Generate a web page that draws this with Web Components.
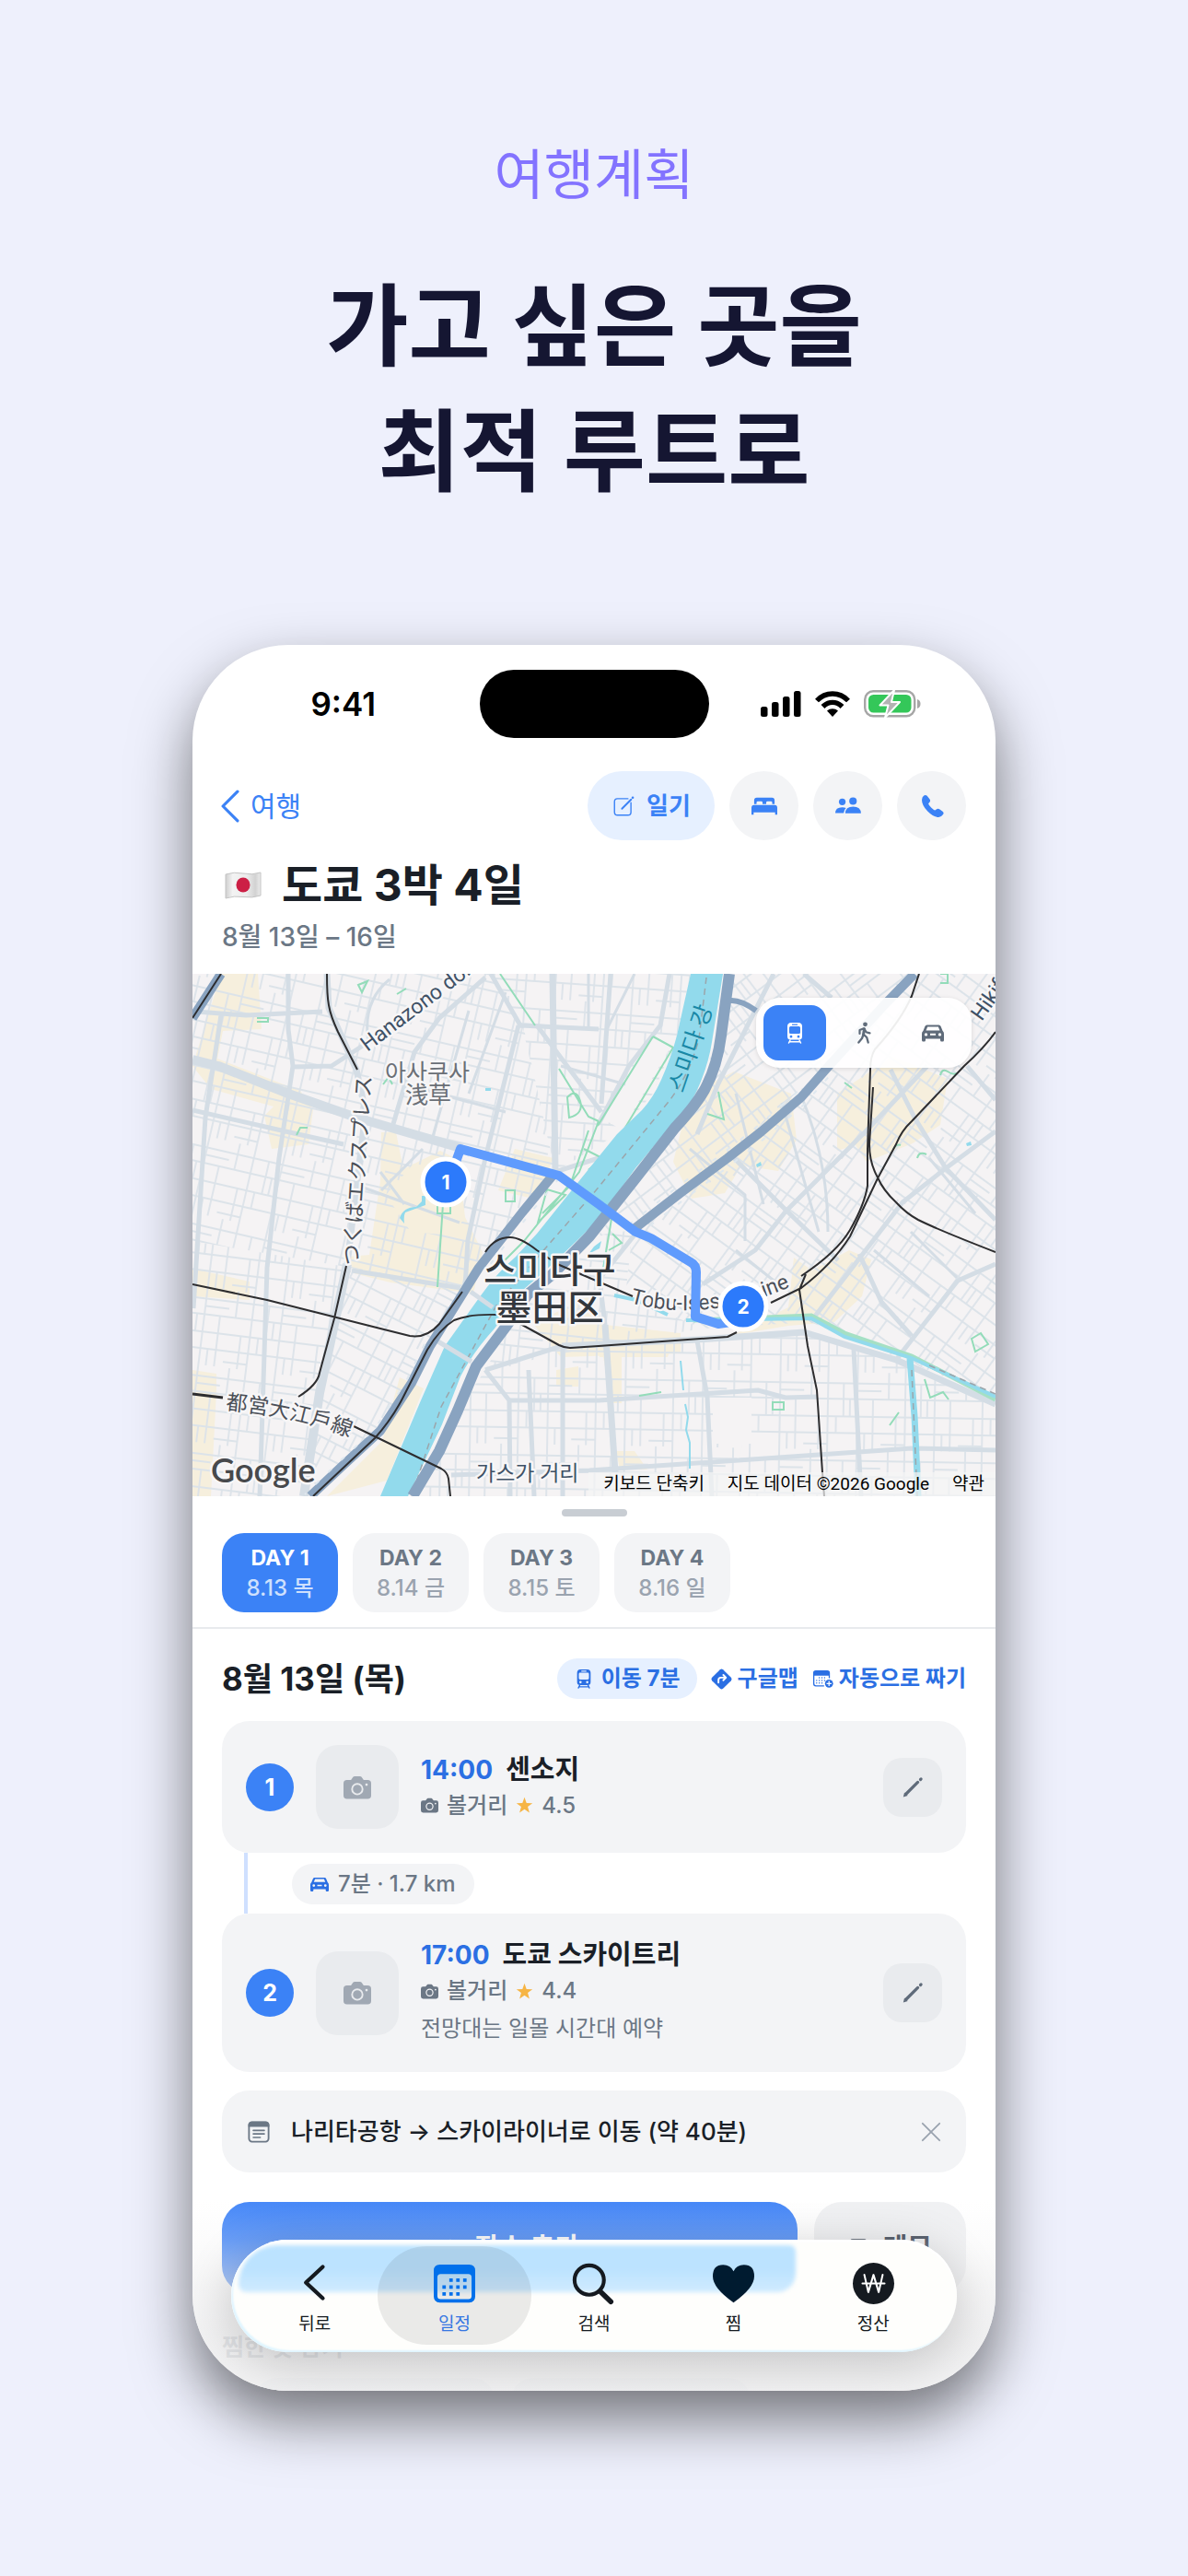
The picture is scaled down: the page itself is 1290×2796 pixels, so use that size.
<!DOCTYPE html>
<html lang="ko">
<head>
<meta charset="utf-8">
<meta name="viewport" content="width=device-width, initial-scale=1">
<title>여행계획</title>
<style>
    body {
        margin: 0;
        min-height: 100vh;
        background: #eef0fc;
        color: #1a1f27;
        font-family: Inter, "Noto Sans CJK KR", sans-serif;
    }
</style>
</head>
<body>
<promo-page>
    <span slot="eyebrow">여행계획</span>
    <span slot="title">가고 싶은 곳을<br>최적 루트로</span>
    <phone-frame>
        <status-bar time="9:41"></status-bar>
        <trip-header back="여행" dates="8월 13일 – 16일">도쿄 3박 4일</trip-header>
        <route-map></route-map>
        <day-tabs>
            <day-tab day="DAY 1" date="8.13 목" active></day-tab>
            <day-tab day="DAY 2" date="8.14 금"></day-tab>
            <day-tab day="DAY 3" date="8.15 토"></day-tab>
            <day-tab day="DAY 4" date="8.16 일"></day-tab>
        </day-tabs>
        <day-plan heading="8월 13일 (목)">
            <place-card number="1" time="14:00" name="센소지" kind="볼거리" rating="4.5"></place-card>
            <travel-leg>7분 · 1.7 km</travel-leg>
            <place-card number="2" time="17:00" name="도쿄 스카이트리" kind="볼거리" rating="4.4">전망대는 일몰 시간대 예약</place-card>
            <memo-card>나리타공항 → 스카이라이너로 이동 (약 40분)</memo-card>
            <plan-actions></plan-actions>
        </day-plan>
        <tab-bar slot="bar">
            <tab-item icon="back">뒤로</tab-item>
            <tab-item icon="calendar" active>일정</tab-item>
            <tab-item icon="search">검색</tab-item>
            <tab-item icon="heart">찜</tab-item>
            <tab-item icon="won">정산</tab-item>
        </tab-bar>
    </phone-frame>
</promo-page>

<script>
const line = 'fill="none" stroke="currentColor" stroke-linecap="round" stroke-linejoin="round"';
const ICONS = {
    chevron: `<path ${line} stroke-width="2" d="M17 2 7 12l10 10"/>`,
    back: `<path ${line} stroke-width="2.4" d="M17 2.5 6.8 12 17 21.5"/>`,
    compose: `<path ${line} stroke-width="1.3" d="M16.500 4.500H6Q3 4.500 3 7.500v10.500q0 3 3 3h10.500q3 0 3-3V8.500"/><path ${line} stroke-width="1.8" d="m10.500 14.500 9.200-9.200"/><circle cx="21.300" cy="3.400" r="1.200" fill="currentColor"/>`,
    bed: `<path fill="currentColor" d="M2.500 10V6.500A2.500 2.500 0 0 1 5 4h14a2.500 2.500 0 0 1 2.500 2.500V10h-2.200V8.700q0-1.200-1.200-1.200h-3.200q-1.200 0-1.200 1.200V10h-3.400V8.700q0-1.200-1.200-1.200H5.900q-1.200 0-1.200 1.200V10zM0 13.500Q0 11 2.500 11h19q2.500 0 2.500 2.500V20h-2v-2.200H2V20H0z"/>`,
    people: `<g fill="currentColor"><circle cx="6.500" cy="8" r="3.100"/><circle cx="16.500" cy="7.300" r="3.500"/><path d="M0 18.500q0-5.500 6.500-5.500 2 0 3.500.8-2 1.700-2.200 4.700z"/><path d="M9.300 18.600q.2-6.200 7.300-6.200t7.300 6.200z"/></g>`,
    phone: `<path fill="currentColor" d="M4.500 2.200q1.500-1.200 2.900.2l2.500 3.200q1 1.500-.1 2.700l-1.200 1.400q.3 1.300 2.600 3.500t3.600 2.700l1.600-1.200q1.200-.9 2.500 0l3 2.200q1.600 1.300.4 2.900-1.600 2.400-4 2.400-5 0-10.400-5.500T2.600 6.200q0-2.600 1.900-4z"/>`,
    train: `<path fill="currentColor" fill-rule="evenodd" d="M8 1h8q4 .3 4 4v11q0 3.500-3.500 3.500h-9Q4 19.500 4 16V5q0-3.700 4-4zm1 1.500v1.200h6V2.500zM7.500 5Q6 5 6 6.500v5Q6 13 7.500 13h9q1.500 0 1.500-1.500v-5Q18 5 16.500 5zM8 14.800a1.400 1.400 0 1 0 0 2.800 1.400 1.400 0 0 0 0-2.800zm8 0a1.400 1.400 0 1 0 0 2.800 1.400 1.400 0 0 0 0-2.800z"/><path ${line} stroke-width="1.500" d="m7 20-1.500 3M17 20l1.500 3M6.500 21.700h11"/>`,
    walk: `<circle cx="13.500" cy="2.800" r="2.400" fill="currentColor"/><path ${line} stroke-width="2.200" d="M12 7.200 7.500 9v4M12.500 7.500l2 3.700 4 1.200"/><path ${line} stroke-width="3" d="m12.500 8-1 6"/><path ${line} stroke-width="2.300" d="m11.500 14-1.500 4-3.700 4.500M12 14l3.200 3 1.500 5.500"/>`,
    car: `<path fill="currentColor" fill-rule="evenodd" d="M5.500 3.500h13q1.500 0 2.100 1.500l2 5q1.400 1 1.400 3V20q0 1.500-1.500 1.500h-1Q20 21.500 20 20v-1.500H4V20q0 1.500-1.500 1.500h-1Q0 21.500 0 20v-7q0-2 1.400-3l2-5Q4 3.500 5.500 3.500zm.7 2L4.500 9.400h15l-1.700-3.900zM4.500 12.200a1.700 1.700 0 1 0 0 3.400 1.700 1.700 0 0 0 0-3.400zm4.500.6v2h6v-2zm10.500-.6a1.700 1.700 0 1 0 0 3.400 1.700 1.700 0 0 0 0-3.400z"/>`,
    turn: `<path fill="currentColor" d="M10.300 1.200q1.700-1.600 3.400 0l9.100 9.100q1.600 1.700 0 3.400l-9.100 9.100q-1.700 1.600-3.400 0l-9.100-9.100q-1.600-1.700 0-3.400z"/><path fill="none" stroke="#fff" stroke-width="2" stroke-linecap="round" stroke-linejoin="round" d="M8.500 16v-3q0-2.700 2.700-2.700h5.300m-2.500-3 3 3-3 3"/>`,
    calendarAdd: `<path fill="currentColor" fill-rule="evenodd" d="M4 2h13q3 0 3 3v6h-1.400V8H2.400v9q0 2 2 2h9v1.300H4q-3 0-3-3V5q0-3 3-3z"/><path ${line} stroke-width="1.500" stroke-dasharray="0 3" d="M8 10.500h9M5 13.500h10M5 16.500h7"/><circle cx="19" cy="17" r="4.600" fill="currentColor"/><path stroke="#fff" stroke-width="1.300" d="M19 14.200v5.600M16.200 17h5.600"/>`,
    camera: `<path fill="currentColor" fill-rule="evenodd" d="M3 5.500h3.500L8.300 3q.5-.7 1.400-.7h4.600q.9 0 1.400.7l1.800 2.500H21q3 0 3 3V19q0 3-3 3H3q-3 0-3-3V8.500q0-3 3-3zm9 2.700a5.300 5.300 0 1 0 0 10.600 5.300 5.300 0 0 0 0-10.600zm0 1.500a3.800 3.800 0 1 1 0 7.600 3.800 3.800 0 0 1 0-7.600zm8-1.200a1.100 1.100 0 1 0 0 2.200 1.100 1.100 0 0 0 0-2.200z"/>`,
    star: `<path fill="currentColor" d="m12 1 2.800 7.700 8.200.3-6.500 5 2.300 8L12 17.300 5.200 22l2.300-8L1 9l8.200-.3z"/>`,
    pencil: `<path ${line} stroke-width="3.200" d="M5 19 17.600 6.400"/><path fill="currentColor" d="m1.800 22.500 1.300-5 3.600 3.600z"/><path ${line} stroke-width="3.200" d="m20.500 3.500.6-.6"/>`,
    note: `<rect x="2.200" y="2.200" width="19.600" height="19.600" rx="3" fill="none" stroke="currentColor" stroke-width="1.700"/><path fill="currentColor" d="M1.500 7V5q0-3.500 3.500-3.500h14q3.500 0 3.500 3.500v2z"/><path ${line} stroke-width="1.500" d="M6.500 10.500h11M6.500 14h11M6.500 17.500h7"/>`,
    close: `<path ${line} stroke-width="2" d="m2 2 20 20M22 2 2 22"/>`,
    plus: `<path ${line} stroke-width="2.400" d="M12 3v18M3 12h18"/>`,
    calendar: `<path fill="currentColor" fill-rule="evenodd" d="M3.500 1h17Q24 1 24 4.500v15q0 3.500-3.500 3.500h-17Q0 23 0 19.500v-15Q0 1 3.500 1zM4 6.500q-1.900 0-1.900 1.900v10.800Q2.100 21.100 4 21.100h16q1.900 0 1.900-1.900V8.400q0-1.900-1.900-1.900z"/><path fill="currentColor" d="M9 9h2v2H9zm4 0h2v2h-2zm4 0h2v2h-2zM5 13h2v2H5zm4 0h2v2H9zm4 0h2v2h-2zm4 0h2v2h-2zM5 17h2v2H5zm4 0h2v2H9zm4 0h2v2h-2z"/>`,
    search: `<circle cx="9.500" cy="10" r="8.500" fill="none" stroke="currentColor" stroke-width="2.200"/><path ${line} stroke-width="3" d="m15.800 16.500 6.200 6"/>`,
    heart: `<path fill="currentColor" d="M12 23Q0 14.500 0 7.800 0 1.200 6 1.200q4.200 0 6 3.700 1.800-3.700 6-3.700 6 0 6 6.600Q24 14.500 12 23z"/>`,
    won: `<circle cx="12" cy="12" r="12" fill="currentColor"/><path fill="none" stroke="#fff" stroke-width="1.100" stroke-linecap="round" stroke-linejoin="round" d="m6.700 7 2.300 10 3-10 3 10 2.300-10M5.600 12h12.800"/>`
};

class AppIcon extends HTMLElement {
    constructor() {
        super();
        this.attachShadow({mode: 'open'});
    }

    connectedCallback() {
        this.shadowRoot.innerHTML = `
            <style>
            :host { display: block; flex: none; width: var(--icon, 24px); height: var(--icon, 24px); }
            svg { display: block; width: 100%; height: 100%; overflow: visible; }
            </style>
            <svg viewBox="0 0 24 24" aria-hidden="true">${ICONS[this.getAttribute('name')] || ''}</svg>
        `;
    }
}

class PromoPage extends HTMLElement {
    constructor() {
        super();
        this.attachShadow({mode: 'open'}).innerHTML = `
            <style>
            :host { display: flex; flex-direction: column; align-items: center; padding: 150px 24px 200px; }
            p { margin: 0; font-size: 59px; line-height: 80px; color: #8373ff; }
            h1 { margin: 56px 0 142px; font-size: 97px; font-weight: 700; line-height: 136px; text-align: center; color: #151632; }
            </style>
            <p><slot name="eyebrow"></slot></p>
            <h1><slot name="title"></slot></h1>
            <slot></slot>
        `;
    }
}

class PhoneFrame extends HTMLElement {
    constructor() {
        super();
        this.attachShadow({mode: 'open'}).innerHTML = `
            <style>
            :host {
                display: block;
                position: relative;
                width: 100%;
                max-width: 872px;
                aspect-ratio: 872 / 1895;
                border-radius: 104px;
                overflow: hidden;
                background: #fff;
                box-shadow: 0 30px 64px rgba(0, 0, 0, .52);
            }
            .fade {
                position: absolute;
                inset: auto 0 0;
                height: 206px;
                background: linear-gradient(rgba(240, 240, 241, 0), rgba(240, 240, 241, .2) 20%, rgba(240, 240, 241, .6) 45%, rgba(240, 240, 241, .85) 70%, rgba(242, 242, 243, .9));
                pointer-events: none;
            }
            .bar { position: absolute; inset: auto 42px 42px; }
            </style>
            <slot></slot>
            <div class="fade"></div>
            <div class="bar"><slot name="bar"></slot></div>
        `;
    }
}

class StatusBar extends HTMLElement {
    constructor() {
        super();
        this.attachShadow({mode: 'open'});
    }

    connectedCallback() {
        this.shadowRoot.innerHTML = `
            <style>
            :host { display: grid; grid-template-columns: 1fr 249px 1fr; align-items: center; padding-top: 27px; color: #000; }
            .time { padding-left: 16px; text-align: center; font-size: 35px; font-weight: 600; line-height: 40px; }
            .island { height: 74px; border-radius: 37px; background: #000; }
            .signals { display: flex; justify-content: center; align-items: center; gap: 15px; padding-right: 24px; }
            svg { display: block; }
            </style>
            <span class="time">${this.getAttribute('time')}</span>
            <span class="island"></span>
            <span class="signals">
                <svg width="44" height="28" viewBox="0 0 44 28"><rect y="17" width="7.500" height="11" rx="2.500"/><rect x="12" y="12" width="7.500" height="16" rx="2.500"/><rect x="24" y="6" width="7.500" height="22" rx="2.500"/><rect x="36" width="7.500" height="28" rx="2.500"/></svg>
                <svg width="38" height="28" viewBox="0 0 38 28"><g fill="none" stroke="#000" stroke-width="5.400"><path d="M2 10.500Q9 3 19 3t17 7.500"/><path d="M8.500 17q4.500-4.600 10.500-4.600T29.500 17"/></g><path d="M19 28 13 21.500q2.400-2.300 6-2.300t6 2.300z"/></svg>
                <svg width="62" height="30" viewBox="0 0 62 30"><rect x="1.200" y="1.200" width="54" height="27" rx="9" fill="none" stroke="#a6a6a6" stroke-width="2.400"/><path fill="#a6a6a6" d="M58 10q3.500 1.200 3.500 5T58 20z"/><rect x="5" y="5" width="46.500" height="19.500" rx="5.500" fill="#34c759"/><path fill="#b3b3b3" stroke="#fff" stroke-width="2" stroke-linejoin="round" d="M33 0 17.500 16.500h9L23 30l16-17h-9z"/></svg>
            </span>
        `;
    }
}

class TripHeader extends HTMLElement {
    constructor() {
        super();
        this.attachShadow({mode: 'open'});
    }

    connectedCallback() {
        this.shadowRoot.innerHTML = `
            <style>
            :host { display: block; padding: 36px 32px 22px; }
            nav { display: flex; align-items: center; gap: 16px; }
            a { display: flex; align-items: center; gap: 3px; margin: 0 auto 0 -10px; font-size: 30px; line-height: 40px; color: #3b82f6; text-decoration: none; --icon: 38px; }
            button { display: flex; align-items: center; justify-content: center; gap: 12px; width: 75px; height: 75px; padding: 0; border: 0; border-radius: 38px; background: #f3f4f6; color: #3b82f6; font: 700 26px/36px Inter, "Noto Sans CJK KR", sans-serif; --icon: 28px; }
            .diary { width: 138px; background: #e6f0ff; --icon: 26px; }
            h2 { display: flex; align-items: center; gap: 22px; margin: 19px 0 8px; padding-left: 3px; font-size: 48px; font-weight: 700; line-height: 60px; }
            p { margin: 0; font-size: 28px; font-weight: 500; line-height: 36px; color: #6b7785; }
            </style>
            <nav>
                <a href="#trips"><app-icon name="chevron"></app-icon>${this.getAttribute('back')}</a>
                <button class="diary"><app-icon name="compose"></app-icon>일기</button>
                <button aria-label="숙소"><app-icon name="bed"></app-icon></button>
                <button aria-label="동행"><app-icon name="people"></app-icon></button>
                <button aria-label="연락처"><app-icon name="phone"></app-icon></button>
            </nav>
            <h2>
                <svg width="40" height="30" viewBox="0 0 40 30" aria-hidden="true">
                    <defs><linearGradient id="cloth"><stop stop-color="#cfcfcf"/><stop offset=".2" stop-color="#f3f3f3"/><stop offset=".6" stop-color="#ececec"/><stop offset=".85" stop-color="#d2d2d2"/><stop offset="1" stop-color="#ececec"/></linearGradient></defs>
                    <path fill="url(#cloth)" stroke="#c4c4c4" d="M1 3q9-3 19-1t19-1v25q-9 3-19 1.500T1 29z"/>
                    <ellipse cx="20" cy="14.500" rx="7.500" ry="8" fill="#cc1f45"/>
                </svg>
                <span><slot></slot></span>
            </h2>
            <p>${this.getAttribute('dates')}</p>
        `;
    }
}

class TravelMode extends HTMLElement {
    constructor() {
        super();
        this.attachShadow({mode: 'open'}).innerHTML = `
            <style>
            :host { display: flex; gap: 7px; padding: 8px; border-radius: 26px; background: rgba(255, 255, 255, .92); box-shadow: 0 1px 5px rgba(0, 0, 0, .12); }
            button { display: flex; align-items: center; justify-content: center; width: 68px; height: 60px; padding: 0; border: 0; border-radius: 16px; background: none; color: #5f6b7a; --icon: 24px; }
            button[aria-pressed="true"] { background: #3b82f6; color: #fff; }
            </style>
            <button aria-pressed="true" aria-label="대중교통"><app-icon name="train"></app-icon></button>
            <button aria-pressed="false" aria-label="도보"><app-icon name="walk"></app-icon></button>
            <button aria-pressed="false" aria-label="자동차"><app-icon name="car"></app-icon></button>
        `;
    }
}

// City blocks are tiled patterns clipped to districts, with the named roads drawn over them
const BLOCKS = 'M0 12h84M0 29h84M0 48h84M0 66h84M8 0v29M26 0v84M43 12v36M58 0v84M75 29v55M16 48v36M0 78h26M58 20h26M35 48v18M66 66v18M50 29v19';
const MINOR = {
    west: [13, '0,0 324,0 360,60 394,215 311,320 296,345 173,319 0,290'],
    southwest: [7, '0,290 173,319 138,455 121,567 0,567'],
    bank: [27, '173,319 296,341 258,404 238,444 204,496 128,567 121,567 138,455'],
    north: [4, '324,0 541,0 526,67 500,130 461,174 394,215 358,56'],
    northeast: [-37, '583,0 784,0 691,100 478,278 440,285 524,167 574,67'],
    east: [36, '784,0 872,0 872,460 671,378 554,385 470,350 478,278 691,100'],
    south: [1, '318,430 401,404 664,389 764,419 872,467 872,567 245,567 288,474'],
    core: [6, '364,348 431,285 478,278 470,350 554,385 440,404 318,430']
};

class RouteMap extends HTMLElement {
    constructor() {
        super();
        this.attachShadow({mode: 'open'});
    }

    connectedCallback() {
        const patterns = Object.entries(MINOR).map(([id, [turn]]) =>
            `<pattern id="p-${id}" width="84" height="84" patternUnits="userSpaceOnUse" patternTransform="rotate(${turn})"><path d="${BLOCKS}" fill="none" stroke="#dce3e9" stroke-width="1.800"/></pattern>`).join('');
        const districts = Object.entries(MINOR).map(([id, [, points]]) =>
            `<polygon points="${points}" fill="url(#p-${id})"/>`).join('');

        this.shadowRoot.innerHTML = `
            <style>
            :host { display: block; position: relative; overflow: hidden; background: #f5f3f4; }
            svg { display: block; width: 100%; height: auto; }
            svg text { paint-order: stroke; stroke: #f7f6f7; stroke-width: 5px; stroke-linejoin: round; font-family: Roboto, "Noto Sans CJK KR", sans-serif; font-size: 23px; fill: #4a4f57; }
            svg .ja { font-family: "Noto Sans CJK JP", sans-serif; }
            svg .area { font-size: 25px; fill: #6a6f76; }
            svg .ward { font-size: 39px; font-weight: 500; fill: #33373c; }
            svg .road { fill: #3f5166; }
            svg .river { fill: #1988a6; stroke: none; font-size: 25px; }
            svg .logo { font-family: Lato, sans-serif; font-weight: 600; font-size: 36px; fill: #47494c; }
            svg .pin { font-family: Inter, sans-serif; font-size: 21px; font-weight: 700; fill: #fff; stroke: none; text-anchor: middle; }
            travel-mode { position: absolute; top: 26px; right: 26px; }
            .credits { position: absolute; right: 0; bottom: 0; display: flex; gap: 25px; padding: 0 12px 0 16px; background: rgba(245, 245, 245, .7); line-height: 26px; }
            .credits a, .credits button { padding: 0; border: 0; background: none; color: #000; font: 19px/26px Roboto, "Noto Sans CJK KR", sans-serif; text-decoration: none; }
            </style>
            <svg viewBox="0 0 872 567" role="img" aria-label="경로 지도">
                <defs>
                    ${patterns}
                    <path id="oedo" d="M36 473Q110 479 176 505"/>
                    <path id="tobu" d="M475 357Q565 382 668 331"/>
                </defs>
                <g fill="#f6efdd">
                    <path d="M0 100 31 0h40l4 60-42 2-6 30 90 35 14 20-5 38-40 5-8-36 10-10L20 125z"/>
                    <path d="M205 172h16l8 40 40-20 20 10 6 60 20 40-10 45-90-12-40-10-5-18 22-2 12-80z"/>
                    <path d="M350 190l42 10-18 45-42-10zM0 320l62 14v20L0 350zM0 430l26 4v20L20 567H0z"/>
                    <path d="M225 438l26 12-40 100-65 17 60-60zM370 380l60-30 10 30 90 10v22l-130 4zM395 430l24-4v22h-24z"/>
                    <path d="M560 120l28-14 62 24 6 50-20 34-40-6-18 30-36 6-20-40 10-40z"/>
                    <path d="M700 130l60-40 60 24-8 50-30 20-50 20-12-18-20 6z"/>
                    <path d="M653 308l20 14 40-22 24 10-10 40-30 28-50 4-60 10 60-30zM442 400h80l-6 16h-74zM446 416h20v50h-10zM460 518h20l14 20h-30z"/>
                </g>
                ${districts}
                <g fill="#f5f3f4"><path d="M565 460h42v50h-10l-4 22-6-22h-22zM500 68l20 10-54 92-12-8-12-4z"/></g>
                <path fill="#f6efdd" d="M210 240l30-34 50 8 6 50-14 20-45-4z"/>
                <g fill="none" stroke="#d4dde5" stroke-width="5" stroke-linejoin="round">
                    <path stroke-width="10" d="M0 93 28 100 104 130 178 156 291 189M168 315 138 455 121 567"/>
                    <path stroke-width="7" d="M391 0 394 215M146 0 148 37 178 104 188 150 168 315M401 404 548 397 664 389 764 419 872 467M448 381 459 541"/>
                    <path d="M324 0 356 56 441 60M354 56 318 200 299 289 296 341M318 4 268 48 241 85 218 163M0 148 101 171 164 185M104 0v60l5 40-15 100-13 119-8 248M31 45 14 156 1 363M4 41 58 45 141 41M109 101 151 100 191 74M173 322 291 341M318 430 401 404M344 463 441 463 614 452 644 460 678 459M281 544 431 539 781 515 872 517M548 398 559 459 564 567M718 407 726 567"/>
                    <path d="M588 200 644 256 701 311 M554 337 611 300 644 258 731 171 798 100M758 104 784 156 818 211 872 267M671 378 771 248 818 211 872 171M724 304 748 356 781 393M764 419 831 333 872 315M841 100 872 137M454 0 444 141M518 0 508 56 474 100 441 163M631 0 571 119 548 174M664 0 694 26M374 56 444 150M318 430l26 33 1 104M448 381l-6-50 40-50M365 430l6 137M402 404v163M441 200l-47 15"/>
                    <path stroke-width="3" d="M191 74Q184 30 214 6M300 40 260 180M340 20 300 130M230 120 340 150M180 230 290 270M205 235 250 190M230 250 204 215M430 0v60M480 0 450 60M400 100 470 120M590 130 620 250M640 140 680 280M660 130Q690 200 690 280M540 190 600 240 600 290M590 300 640 340M780 280 830 330M740 300 800 350M800 200 850 260"/>
                </g>
                <g fill="none" stroke="#93dcb9" stroke-width="2">
                    <path d="M334 0 372 56M398 103 430 155 441 160M500 68 440 165M500 68 522 80 468 170M441 160 420 215 360 290 330 320M430 170 410 230 380 260M425 190l20 10-14 12 16 6M405 240l-30 30 10-36zM407 134q10-10 14 4t-12 18zM436 215 500 190M272 250l-6 90M266 250h14v10h-14zM180 12l10-4-6 12zM222 22l10-6M207 120l6-8 4 8M113 175l4-8h8M70 48h12v4H70M340 235h10v12h-10zM446 320l10-60 14-20M452 300l14-8-10-10M571 128l6 30-18-6M708 118l8 6M812 110q2-8 8-4t10 2M761 190q4-6 8-4M787 200q2-8 10-4M846 396l10-6 8 12-14 8zM795 440l6 20 14-6 6 8M630 465h12v8h-12zM757 490l10-14M485 458l24-4M812 0h8v10h-8"/>
                </g>
                <path fill="none" stroke="#a5e0c4" stroke-width="5" d="M544 376 672 371 708 390 781 415 872 462"/>
                <g fill="#92daec">
                    <path d="M541 0 526 67Q520 90 509 115 500 135 488 148L461 174 431 211 374 282 351 307Q330 325 311 352L274 404 248 463 204 567H234L271 489 291 437Q305 410 328 385L358 344 391 315 441 267 481 211 521 163Q540 145 548 126 560 100 564 74L576 0z"/>
                    <path d="M225 265q4-12 18-12l6-6v-6h4v10l-22 8q-2 4-1 12zM318 124h6v3h-6zM436 296l8-6-2 8-12 6zM612 207l5-3 1 4-5 2zM840 184l5-2 1 4-5 1z"/>
                </g>
                <path fill="none" stroke="#92daec" stroke-width="4" d="M458 349 482 354 516 370M536 376 672 374 708 394 781 417 872 459"/>
                <path fill="none" stroke="#92daec" stroke-width="2" d="M530 420l3 32M535 467l3 14-2 14 4 14v28"/>
                <path fill="none" stroke="#92daec" stroke-width="7" d="M779 417 784 480 788 567"/>
                <g fill="none" stroke="#9ba5ab" stroke-width="1.500" stroke-dasharray="7 5"><path d="M558 4 550 70Q540 110 516 140L434 240 390 290 330 360 270 470 238 567M781 430 787 567M800 425 872 456"/></g>
                <path stroke="#d4dde5" stroke-width="5" d="M302 345 326 362M265 398 303 421"/>
                <g fill="none" stroke="#89a3c0" stroke-linejoin="round">
                    <path stroke-width="12" d="M583 0 574 67Q570 100 556 126 545 145 524 167L481 222 431 285 391 326 364 348 344 378 308 426 288 474 268 518 239 567"/>
                    <path stroke-width="10" d="M391 219 358 259 311 319 258 404 238 444 204 496 164 533 128 567M478 278 531 237 581 200 618 171 661 134 691 100 751 34 784 0M0 48 31 0"/>
                    <path stroke-width="6" d="M580 30Q592 26 612 40"/>
                    <path stroke="#dfe8ef" stroke-width="2" stroke-dasharray="5 14" d="M398 222 365 262 318 322M252 402 232 442 198 494 158 531 122 565M482 285 535 244 585 207 622 178 665 141 695 107M474 272 527 231 577 194 614 165 657 128"/>
                </g>
                <g fill="none" stroke="#2d2d2f" stroke-width="2" stroke-linejoin="round">
                    <path d="M0 48 31 0M146 0Q146 24 148 34 150 46 158 63L179 104M167 317 154 374 138 433Q136 446 115 459M0 337 81 354 204 385 236 393Q254 396 268 380L293 345"/>
                    <path d="M131 567 198 504Q216 484 228 461L255 408Q268 386 284 376 300 369 331 370 345 374 358 381L398 403Q404 406 410 406L441 404 581 394 591 389M318 302Q328 286 345 286 356 286 374 300L396 315 478 350M175 491 270 537Q277 541 278 548L280 567"/>
                    <path stroke-width="3" d="M0 456 33 460"/>
                    <path d="M789 0 781 24Q770 50 741 82 736 90 736 104L733 190V230Q730 250 714 278 700 302 661 328M739 123 735 185Q735 205 744 221 750 235 764 248 775 260 788 267 810 278 872 302M872 63Q860 80 838 100L781 160Q770 170 764 185L744 222 714 285Q695 315 661 341L628 357M666 326 659 343 668 404 678 452 684 541 686 567"/>
                </g>
                <text class="road" transform="translate(190 85) rotate(-37)">Hanazono dori</text>
                <text class="area" x="255" y="116" text-anchor="middle">아사쿠사</text>
                <text class="area ja" x="256" y="140" text-anchor="middle">浅草</text>
                <text class="ja" transform="translate(180 317) rotate(-86)">つくばエクスプレス</text>
                <text class="ja"><textPath href="#oedo">都営大江戸線</textPath></text>
                <text x="308" y="550" class="road">가스가 거리</text>
                <text x="388" y="335" class="ward" text-anchor="middle">스미다구</text>
                <text x="388" y="376" class="ward ja" text-anchor="middle">墨田区</text>
                <text><textPath href="#tobu">Tobu-Isesaki Line</textPath></text>
                <text class="river" transform="translate(533 130) rotate(-71)">스미다 강</text>
                <text class="road" transform="translate(857 52) rotate(-55)">Hikifune</text>
                <path fill="none" stroke="#5f9bfd" stroke-width="10" stroke-linejoin="round" d="M286 204 291 190 398 219 441 250 481 280 498 287 541 313Q547 316 547 324L546 372 571 380 598 376"/>
                <g fill="#2c7afb" stroke="#fff" stroke-width="5"><circle cx="275" cy="226" r="25"/><circle cx="598" cy="361" r="25"/></g>
                <text class="pin" x="275" y="234">1</text>
                <text class="pin" x="598" y="369">2</text>
                <text class="logo" x="20" y="552">Google</text>
            </svg>
            <travel-mode></travel-mode>
            <div class="credits">
                <button>키보드 단축키</button>
                <a href="#map-data">지도 데이터 ©2026 Google</a>
                <a href="#terms">약관</a>
            </div>
        `;
    }
}

class DayTabs extends HTMLElement {
    constructor() {
        super();
        this.attachShadow({mode: 'open'}).innerHTML = `
            <style>
            :host { display: block; padding: 14px 32px 16px; border-bottom: 2px solid #e8eaed; }
            .handle { width: 71px; height: 8px; margin: 0 auto 18px; border-radius: 4px; background: #c8cdd3; }
            .tabs { display: flex; gap: 16px; }
            </style>
            <div class="handle"></div>
            <div class="tabs"><slot></slot></div>
        `;
    }
}

class DayTab extends HTMLElement {
    constructor() {
        super();
        this.attachShadow({mode: 'open'});
    }

    connectedCallback() {
        this.shadowRoot.innerHTML = `
            <style>
            :host { display: block; }
            button { display: block; width: 126px; padding: 11px 0 10px; border: 0; border-radius: 24px; background: #f3f4f6; color: #9aa3af; font: 500 24px/33px Inter, "Noto Sans CJK KR", sans-serif; }
            b { display: block; font-size: 23px; line-height: 32px; color: #6b7785; }
            :host([active]) button { background: #3b82f6; color: #cfe0fd; }
            :host([active]) b { color: #fff; }
            </style>
            <button><b>${this.getAttribute('day')}</b>${this.getAttribute('date')}</button>
        `;
    }
}

class DayPlan extends HTMLElement {
    constructor() {
        super();
        this.attachShadow({mode: 'open'});
    }

    connectedCallback() {
        this.shadowRoot.innerHTML = `
            <style>
            :host { display: block; padding: 32px 32px 0; }
            header { display: flex; align-items: center; gap: 15px; margin-bottom: 24px; color: #2b6fe3; font-size: 24px; font-weight: 700; line-height: 44px; }
            h3 { margin: 0 auto 0 0; font-size: 35px; font-weight: 700; line-height: 44px; color: #1a1f27; }
            .chip { display: flex; align-items: center; gap: 8px; padding: 0 18px; border-radius: 22px; background: #e6f0ff; --icon: 22px; }
            a { display: flex; align-items: center; gap: 6px; color: inherit; text-decoration: none; --icon: 23px; }
            </style>
            <header>
                <h3>${this.getAttribute('heading')}</h3>
                <span class="chip"><app-icon name="train"></app-icon>이동 7분</span>
                <a href="#google-maps"><app-icon name="turn"></app-icon>구글맵</a>
                <a href="#auto-plan"><app-icon name="calendarAdd"></app-icon>자동으로 짜기</a>
            </header>
            <slot></slot>
        `;
    }
}

class PlaceCard extends HTMLElement {
    constructor() {
        super();
        this.attachShadow({mode: 'open'});
    }

    connectedCallback() {
        const note = this.textContent.trim();

        this.shadowRoot.innerHTML = `
            <style>
            :host { display: flex; align-items: center; gap: 24px; padding: 26px; border-radius: 30px; background: #f3f4f6; }
            .number { flex: none; width: 52px; border-radius: 26px; background: #3b82f6; color: #fff; text-align: center; font-size: 25px; font-weight: 700; line-height: 52px; }
            .photo { display: grid; place-items: center; flex: none; width: 90px; height: 91px; border-radius: 24px; background: #e9ebee; color: #a0a8b3; --icon: 30px; }
            .info { flex: 1; display: grid; gap: 2px; }
            .title { display: flex; gap: 14px; font-size: 29px; font-weight: 700; line-height: 38px; }
            time { font-size: 28px; color: #2b6fe3; }
            .meta { display: flex; align-items: center; gap: 9px; font-size: 24px; font-weight: 500; line-height: 36px; color: #6b7785; --icon: 19px; }
            .meta .star { color: #f6b545; }
            .note { font-size: 24px; line-height: 42px; color: #6b7785; }
            button { display: grid; place-items: center; flex: none; width: 64px; height: 64px; padding: 0; border: 0; border-radius: 20px; background: #e9ebee; color: #5f6b7a; --icon: 24px; }
            </style>
            <span class="number">${this.getAttribute('number')}</span>
            <span class="photo"><app-icon name="camera"></app-icon></span>
            <div class="info">
                <div class="title"><time>${this.getAttribute('time')}</time>${this.getAttribute('name')}</div>
                <div class="meta"><app-icon name="camera"></app-icon>${this.getAttribute('kind')}<app-icon class="star" name="star"></app-icon>${this.getAttribute('rating')}</div>
                ${note ? '<div class="note"><slot></slot></div>' : ''}
            </div>
            <button aria-label="수정"><app-icon name="pencil"></app-icon></button>
        `;
    }
}

class TravelLeg extends HTMLElement {
    constructor() {
        super();
        this.attachShadow({mode: 'open'}).innerHTML = `
            <style>
            :host { display: flex; margin-left: 24px; padding: 12px 0 10px 48px; border-left: 4px solid #cfe0ff; }
            span { display: flex; align-items: center; gap: 10px; padding: 0 20px; border-radius: 22px; background: #f3f4f6; color: #6b7785; font-size: 24px; font-weight: 500; line-height: 44px; --icon: 20px; }
            app-icon { color: #2b6fe3; }
            </style>
            <span><app-icon name="car"></app-icon><slot></slot></span>
        `;
    }
}

class MemoCard extends HTMLElement {
    constructor() {
        super();
        this.attachShadow({mode: 'open'}).innerHTML = `
            <style>
            :host { display: flex; align-items: center; gap: 22px; margin-top: 20px; padding: 24px 27px; border-radius: 30px; background: #f3f4f6; font-size: 26px; font-weight: 500; line-height: 41px; color: #6b7785; --icon: 26px; }
            span { flex: 1; color: #1a1f27; }
            button { padding: 0; border: 0; background: none; color: #9aa3af; --icon: 22px; }
            </style>
            <app-icon name="note"></app-icon>
            <span><slot></slot></span>
            <button aria-label="삭제"><app-icon name="close"></app-icon></button>
        `;
    }
}

class PlanActions extends HTMLElement {
    constructor() {
        super();
        this.attachShadow({mode: 'open'}).innerHTML = `
            <style>
            :host { display: block; padding-top: 32px; }
            .row { display: flex; gap: 18px; }
            button { display: flex; align-items: center; justify-content: center; gap: 16px; height: 99px; padding: 0 37px; border: 0; border-radius: 30px; background: #f0f1f3; color: #374151; font: 700 29px/40px Inter, "Noto Sans CJK KR", sans-serif; --icon: 22px; }
            .add { flex: 1; background: #4688f8; color: #fff; }
            h4 { margin: 38px 0 12px; font-size: 26px; font-weight: 700; line-height: 42px; color: #7d8794; }
            .saved { display: flex; gap: 18px; padding: 0 36px; }
            .saved i { width: 260px; height: 60px; border-radius: 24px; background: #e6ebf0; }
            </style>
            <div class="row">
                <button class="add"><app-icon name="plus"></app-icon>장소 추가</button>
                <button><app-icon name="note"></app-icon>메모</button>
            </div>
            <h4>찜한 곳 담기</h4>
            <div class="saved"><i></i><i></i></div>
        `;
    }
}

class TabBar extends HTMLElement {
    constructor() {
        super();
        this.attachShadow({mode: 'open'}).innerHTML = `
            <style>
            :host { display: block; position: relative; border-radius: 61px; overflow: hidden; background: #fefefc; box-shadow: inset 0 3px 2px #fff, inset 2px -2px 2px #dff5ff, 0 12px 54px rgba(0, 0, 0, .2); }
            .glass { position: absolute; inset: 6px 175px auto 8px; height: 51px; border-radius: 50px 8px 24px 10px; background: linear-gradient(#bce3ff 50%, #d0ebff); filter: blur(2px); }
            nav { position: relative; display: flex; padding: 7px 15px 8px; }
            </style>
            <div class="glass"></div>
            <nav><slot></slot></nav>
        `;
    }
}

class TabItem extends HTMLElement {
    constructor() {
        super();
        this.attachShadow({mode: 'open'});
    }

    connectedCallback() {
        this.shadowRoot.innerHTML = `
            <style>
            :host { display: block; flex: 1; }
            a { position: relative; display: flex; flex-direction: column; align-items: center; padding: 18px 0 9px; color: #151a20; font-size: 19px; font-weight: 400; line-height: 26px; text-decoration: none; --icon: 45px; }
            app-icon { margin-bottom: 9px; }
            app-icon[name="back"] { --icon: 43px; margin-bottom: 11px; }
            app-icon[name="heart"] { color: #001b30; }
            :host([active]) a { color: #3b82f6; }
            :host([active]) app-icon { color: #007aff; }
            :host([active]) a::before { content: ""; position: absolute; inset: 0 -8px; border-radius: 54px; background: rgba(0, 0, 0, .08); }
            </style>
            <a href="#${this.getAttribute('icon')}"><app-icon name="${this.getAttribute('icon')}"></app-icon><slot></slot></a>
        `;
    }
}

customElements.define('app-icon', AppIcon);
customElements.define('phone-frame', PhoneFrame);
customElements.define('status-bar', StatusBar);
customElements.define('trip-header', TripHeader);
customElements.define('travel-mode', TravelMode);
customElements.define('route-map', RouteMap);
customElements.define('day-tabs', DayTabs);
customElements.define('day-tab', DayTab);
customElements.define('day-plan', DayPlan);
customElements.define('place-card', PlaceCard);
customElements.define('travel-leg', TravelLeg);
customElements.define('memo-card', MemoCard);
customElements.define('plan-actions', PlanActions);
customElements.define('tab-bar', TabBar);
customElements.define('tab-item', TabItem);
customElements.define('promo-page', PromoPage);
</script>
</body>
</html>
